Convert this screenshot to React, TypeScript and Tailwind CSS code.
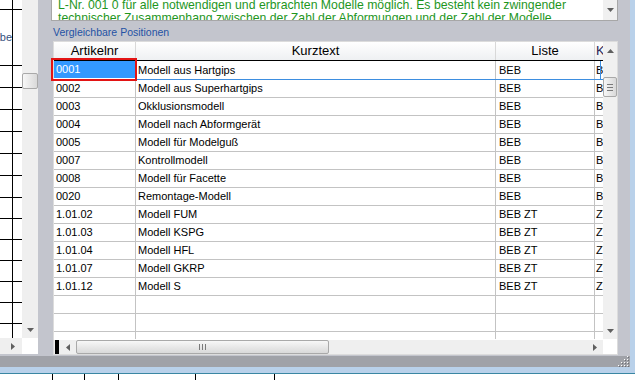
import React from 'react';

type Dir = 'up' | 'down' | 'left' | 'right';

const rows: string[][] = [
  ['0001', 'Modell aus Hartgips', 'BEB', 'BEB'],
  ['0002', 'Modell aus Superhartgips', 'BEB', 'BEB'],
  ['0003', 'Okklusionsmodell', 'BEB', 'BEB'],
  ['0004', 'Modell nach Abformgerät', 'BEB', 'BEB'],
  ['0005', 'Modell für Modelguß', 'BEB', 'BEB'],
  ['0007', 'Kontrollmodell', 'BEB', 'BEB'],
  ['0008', 'Modell für Facette', 'BEB', 'BEB'],
  ['0020', 'Remontage-Modell', 'BEB', 'BEB'],
  ['1.01.02', 'Modell FUM', 'BEB ZT', 'ZT'],
  ['1.01.03', 'Modell KSPG', 'BEB ZT', 'ZT'],
  ['1.01.04', 'Modell HFL', 'BEB ZT', 'ZT'],
  ['1.01.07', 'Modell GKRP', 'BEB ZT', 'ZT'],
  ['1.01.12', 'Modell S', 'BEB ZT', 'ZT'],
  ['', '', '', ''],
  ['', '', '', ''],
  ['', '', '', ''],
];

// row heights of the spreadsheet on the left (incl. bottom line)
const sheetRows = [10, 56, 22, 22, 22, 22, 22, 22, 21, 21, 21, 21, 21, 21, 14];

function Arrow({ dir }: { dir: Dir }) {
  const vertical = dir === 'up' || dir === 'down';
  const pts = {
    up: '0,4 7,4 3.5,0',
    down: '0,0 7,0 3.5,4',
    left: '4,0 4,7 0,3.5',
    right: '0,0 0,7 4,3.5',
  }[dir];
  return (
    <svg width={vertical ? 7 : 4} height={vertical ? 4 : 7} viewBox={vertical ? '0 0 7 4' : '0 0 4 7'}>
      <polygon points={pts} fill="#5f5f5f" />
    </svg>
  );
}

function LeftPane() {
  return (
    <div className="w-[38px] flex flex-col bg-[#c3c5cd]">
      <div className="flex h-[338px]">
        <div className="w-[22px] bg-white flex flex-col overflow-hidden">
          {sheetRows.map((h, i) => (
            <div
              key={i}
              className={`flex shrink-0 ${i < sheetRows.length - 1 ? 'border-b border-black' : ''}`}
              style={{ height: h }}
            >
              <div className="w-[13px] border-r border-black flex items-center justify-end overflow-hidden">
                {i === 1 && <span className="text-[11px] text-[#34507c] whitespace-nowrap">ebe</span>}
              </div>
              <div className="flex-1" />
            </div>
          ))}
        </div>
        <div className="w-[16px] bg-[#efefef] flex flex-col">
          <div className="h-[73px]" />
          <div className="h-[16px] rounded-[2px] border border-[#a9a9a9] bg-linear-to-r from-[#f7f7f7] to-[#d9d9d9]" />
          <div className="flex-1" />
          <div className="h-[16px] flex items-center justify-center">
            <Arrow dir="down" />
          </div>
        </div>
      </div>
      <div className="flex h-[16px]">
        <div className="w-[22px] bg-[#efefef] flex items-center pl-[11px]">
          <Arrow dir="right" />
        </div>
        <div className="w-[16px] bg-white" />
      </div>
    </div>
  );
}

function Grid() {
  return (
    <div className="relative ml-[2px] w-[565px] h-[314px] border border-[#dcdcdc] bg-white flex flex-col">
      <div className="flex h-[297px]">
        <div className="w-[549px] flex flex-col">
          <div className="h-[18px] flex bg-linear-to-b from-white to-[#eef0f2] text-[13px] text-black">
            <div className="w-[82px] border-r border-[#d8d8d8] flex items-center justify-center">Artikelnr</div>
            <div className="w-[360px] border-r border-[#d8d8d8] flex items-center justify-center">Kurztext</div>
            <div className="w-[99px] border-r border-[#d8d8d8] flex items-center justify-center">Liste</div>
            <div className="w-[8px] overflow-hidden flex items-center pl-[1px] text-[#2a1f55]">K</div>
          </div>
          <div className="flex-1 overflow-hidden text-[11px] text-black">
            {rows.map((r, i) => {
              const first = i === 0;
              return (
                <div
                  key={i}
                  className={`relative flex shrink-0 ${
                    first
                      ? 'h-[20px] border-t border-t-black border-b border-b-[#3d8ee0]'
                      : 'h-[18px] border-b border-[#c3c3c3]'
                  }`}
                >
                  <div
                    className={`w-[82px] border-r border-[#c3c3c3] flex items-center pl-[2px] ${
                      first ? 'bg-[#3399ff] text-white border-b border-b-white' : ''
                    }`}
                  >
                    {r[0]}
                  </div>
                  <div className="w-[360px] border-r border-[#c3c3c3] flex items-center pl-[2px] whitespace-nowrap">
                    {r[1]}
                  </div>
                  <div className="w-[99px] border-r border-[#c3c3c3] flex items-center pl-[3px] whitespace-nowrap">
                    {r[2]}
                  </div>
                  <div className="w-[8px] overflow-hidden flex items-center pl-[1px] whitespace-nowrap">{r[3]}</div>
                  {first && <div className="absolute right-[2px] top-0 bottom-0 w-px bg-[#3d8ee0]" />}
                </div>
              );
            })}
          </div>
        </div>
        <div className="w-[14px] bg-[#f0f0f0] flex flex-col">
          <div className="h-[17px] flex items-center justify-center">
            <Arrow dir="up" />
          </div>
          <div className="h-[18px]" />
          <div className="h-[20px] rounded-[2px] border border-[#a9a9a9] bg-linear-to-r from-[#f7f7f7] to-[#d9d9d9] flex flex-col items-center justify-center gap-[2px]">
            <div className="w-[6px] h-px bg-[#7a7a7a]" />
            <div className="w-[6px] h-px bg-[#7a7a7a]" />
            <div className="w-[6px] h-px bg-[#7a7a7a]" />
          </div>
          <div className="flex-1" />
          <div className="h-[17px] flex items-center justify-center">
            <Arrow dir="down" />
          </div>
        </div>
      </div>
      <div className="flex h-[15px] mt-px">
        <div className="w-[549px] bg-[#efefef] flex items-stretch">
          <div className="ml-px w-[4px] bg-black" />
          <div className="w-[17px] flex items-center justify-center">
            <Arrow dir="left" />
          </div>
          <div className="w-[253px] rounded-[2px] border border-[#a9a9a9] bg-linear-to-b from-[#f7f7f7] to-[#d9d9d9] flex items-center justify-center gap-[2px]">
            <div className="w-px h-[6px] bg-[#7a7a7a]" />
            <div className="w-px h-[6px] bg-[#7a7a7a]" />
            <div className="w-px h-[6px] bg-[#7a7a7a]" />
          </div>
          <div className="flex-1" />
          <div className="w-[17px] flex items-center justify-center">
            <Arrow dir="right" />
          </div>
        </div>
        <div className="w-[14px] bg-white" />
      </div>
      {/* focus frame around the current cell */}
      <div className="absolute -left-[3px] top-[16px] w-[86px] h-[23px] border-2 border-[#e31414]" />
    </div>
  );
}

function MainPanel() {
  return (
    <div className="w-[592px] bg-[#c3c5cd] pl-[13px] flex flex-col">
      {/* Hinweistext */}
      <div className="w-[567px] h-[21px] flex bg-white border-x border-b border-[#a7a7a7]">
        <div className="flex-1 overflow-hidden pl-[6px] text-[12.25px] leading-[12.5px] text-[#1e961e] whitespace-nowrap">
          <div className="-mt-[1px]">
            L-Nr. 001 0 für alle notwendigen und erbrachten Modelle möglich. Es besteht kein zwingender
            <br />
            technischer Zusammenhang zwischen der Zahl der Abformungen und der Zahl der Modelle
          </div>
        </div>
        <div className="w-[14px] bg-[#f0f0f0] flex items-center justify-center">
          <Arrow dir="down" />
        </div>
      </div>
      <div className="h-[20px] flex items-center pt-[4px] pl-[2px] text-[10.5px] text-[#2452a4]">
        Vergleichbare Positionen
      </div>
      <Grid />
    </div>
  );
}

export default function App() {
  return (
    <div className="w-[635px] h-[380px] overflow-hidden bg-white flex flex-col font-['Liberation_Sans',Arial,sans-serif]">
      <div className="flex h-[367px]">
        <div className="w-[630px] flex flex-col">
          <div className="flex h-[356px]">
            <LeftPane />
            <MainPanel />
          </div>
          <div className="relative h-[11px] bg-[#a0a2a8]">
            <svg className="absolute right-[1px] bottom-0" width="11" height="11" viewBox="0 0 11 11">
              {[
                [9, 1], [9, 4], [6, 4], [9, 7], [6, 7], [3, 7], [9, 10], [6, 10], [3, 10], [0, 10],
              ].map(([x, y], i) => (
                <g key={i}>
                  <rect x={x} y={y - 1} width="1" height="1" fill="#ffffff" />
                  <rect x={x + 1} y={y} width="1" height="1" fill="#6e7076" />
                </g>
              ))}
            </svg>
          </div>
        </div>
        <div className="w-[5px] bg-[#b9d1ea]" />
      </div>
      <div className="h-[6px] bg-[#b9d1ea]" />
      <div className="h-px bg-[#3a87a3]" />
      <div className="flex flex-1">
        <div className="w-[53px] border-r border-black" />
        <div className="w-[32px] border-r border-black" />
        <div className="w-[34px] border-r border-black" />
        <div className="w-[77px] border-r border-black" />
        <div className="w-[79px] border-r border-black" />
      </div>
    </div>
  );
}
